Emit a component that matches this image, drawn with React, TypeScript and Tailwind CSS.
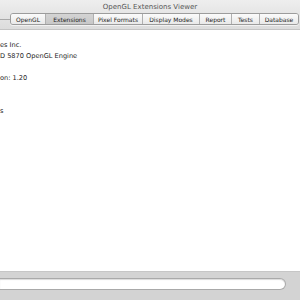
import React from "react";

const tabs = [
  { label: "OpenGL", w: "w-[34px]" },
  { label: "Extensions", w: "w-[48px]", active: true },
  { label: "Pixel Formats", w: "w-[49px]" },
  { label: "Display Modes", w: "w-[57px]" },
  { label: "Report", w: "w-[32px]" },
  { label: "Tests", w: "w-[28px]" },
  { label: "Database", w: "w-[39px]" },
];

const lines = ["es Inc.", "D 5870 OpenGL Engine", "", "on: 1.20", "", "", "s"];

export default function App() {
  return (
    <div className="w-[300px] h-[300px] flex flex-col overflow-hidden bg-white font-['DejaVu_Sans',sans-serif]">
      {/* Unified title bar + toolbar */}
      <div className="h-[30px] flex flex-col bg-gradient-to-b from-[#eeeeee] to-[#dcdcdc] border-b border-[#c4c4c4]">
        <div className="h-[13px] flex items-center justify-center text-[7px] text-[#555] pt-[1px]">
          OpenGL Extensions Viewer
        </div>
        <div className="flex items-center">
          <div className="w-[10px] h-px bg-[#a8a8a8]" />
          <div className="flex h-[12px] rounded-[3px] border border-[#9c9c9c] overflow-hidden shadow-[0_1px_0_rgba(255,255,255,0.6)]">
            {tabs.map((t, i) => (
              <div
                key={t.label}
                className={`${t.w} flex items-center justify-center text-[6px] text-[#222] ${
                  i > 0 ? "border-l border-[#b0b0b0]" : ""
                } ${
                  t.active
                    ? "bg-gradient-to-b from-[#d4d4d4] to-[#c8c8c8]"
                    : "bg-gradient-to-b from-[#fbfbfb] to-[#e9e9e9]"
                }`}
              >
                {t.label}
              </div>
            ))}
          </div>
        </div>
      </div>

      {/* Content */}
      <div className="flex-1 pt-[10px] text-[6.6px] leading-[11px] text-[#1e1e1e]">
        {lines.map((l, i) => (
          <div key={i} className="h-[11px] whitespace-nowrap">
            {l}
          </div>
        ))}
      </div>

      {/* Bottom search bar */}
      <div className="h-[29px] bg-[#d3d3d3] border-t border-[#c6c6c6] flex items-start pt-[6px]">
        <div className="w-[286px] h-[12px] bg-white rounded-r-[6px] border border-[#a9a9a9] border-l-0 shadow-[inset_0_1px_1px_rgba(0,0,0,0.15)]" />
      </div>
    </div>
  );
}
